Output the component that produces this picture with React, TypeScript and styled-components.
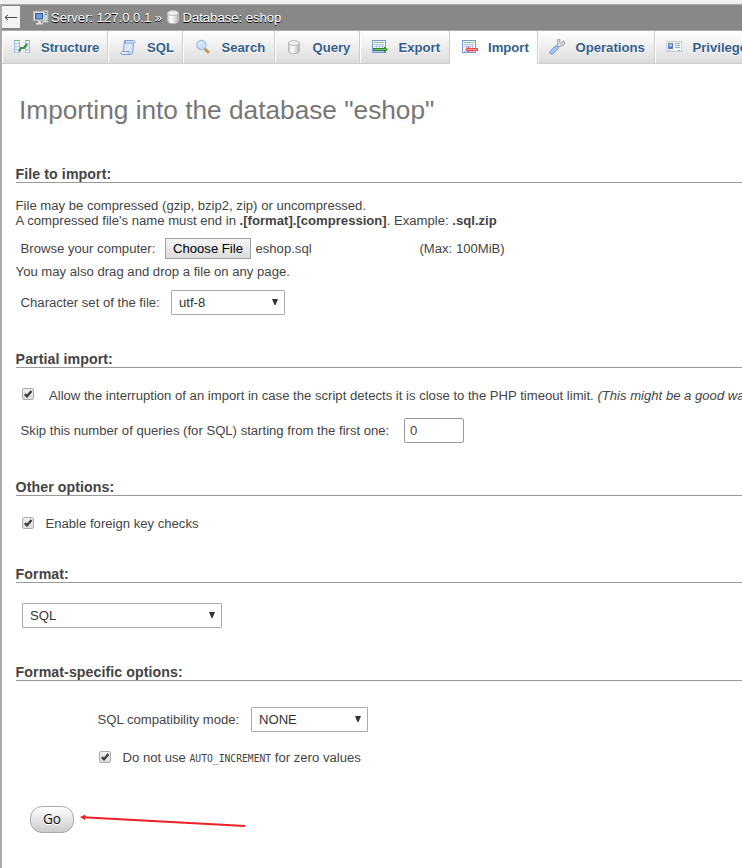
import React from 'react';
import styled, { createGlobalStyle } from 'styled-components';

const Global = createGlobalStyle`
  * { box-sizing: border-box; }
  html, body { margin: 0; background: #fff; overflow: hidden; }
  body { font-family: "Liberation Sans", Arial, sans-serif; font-size: 13.12px; color: #444; }
`;

const Page = styled.div`
  width: 742px;
  height: 868px;
  overflow: hidden;
  background: #fff;
  border-top: 4px solid #f0f0f0;
`;

const Frame = styled.div`
  height: 864px;
  border-left: 2px solid #aaa;
  border-top: 1px solid #aaa;
  white-space: nowrap;
`;

const ServerBar = styled.header`
  display: flex;
  align-items: center;
  height: 25px;
  padding-bottom: 1px;
  background: #888;
  color: #fff;
  text-shadow: 0 1px 0 #000;
  svg { flex: none; }
`;

const CollapseButton = styled.div`
  width: 18px;
  height: 22px;
  margin: 0 13px 0 0;
  background: #f3f3f3;
  display: flex;
  align-items: center;
  justify-content: center;
`;

const Crumb = styled.span<{ $w: number }>`
  width: ${p => p.$w}px;
  margin-left: 2px;
  letter-spacing: -0.02px;
`;

const Tabs = styled.nav`
  display: flex;
  height: 34px;
  border-top: 1px solid #aaa;
`;

const Tab = styled.a<{ $w: number; $active?: boolean; $gap: number; $pad: number }>`
  flex: none;
  display: flex;
  align-items: center;
  width: ${p => p.$w}px;
  height: 33px;
  padding-left: ${p => p.$pad}px;
  gap: ${p => p.$gap}px;
  border-right: 1px solid #ccc;
  border-bottom: 1px solid ${p => (p.$active ? '#fff' : '#ccc')};
  box-shadow: ${p => (p.$active ? 'none' : 'inset 1px 0 0 #fff')};
  background: ${p => (p.$active ? '#fff' : 'linear-gradient(#ffffff, #dcdcdc)')};
  color: #335f8c;
  font-weight: bold;
  text-shadow: 0 1px 0 #fff;
  svg { flex: none; }
`;

const Title = styled.h2`
  margin: 29px 0 0 17px;
  height: 34px;
  line-height: 34px;
  font-size: 26.24px;
  font-weight: normal;
  color: #777;
`;

const Section = styled.section<{ $top: number }>`
  margin: ${p => p.$top}px 0 0 13.6px;
`;

const Heading = styled.h3`
  margin: 0;
  height: 17px;
  line-height: 17px;
  font-size: 14.2px;
  color: #444;
  border-bottom: 1px solid #999;
  letter-spacing: 0.07px;
`;

const Row = styled.div<{ $top?: number; $h?: number; $left?: number }>`
  display: flex;
  align-items: center;
  height: ${p => p.$h ?? 15}px;
  margin-top: ${p => p.$top ?? 0}px;
  padding-left: ${p => p.$left ?? 0}px;
`;

const Text = styled.span<{ $w?: number }>`
  flex: none;
  width: ${p => (p.$w ? p.$w + 'px' : 'auto')};
  white-space: pre;
`;

const FileButton = styled.span`
  width: 86px;
  height: 21px;
  margin-right: 4.500px;
  border: 1px solid #a0a0a0;
  background: linear-gradient(#f6f6f6, #dcdcdc);
  color: #000;
  text-align: center;
  line-height: 19px;
`;

const Select = styled.span<{ $w: number }>`
  display: flex;
  align-items: center;
  justify-content: space-between;
  width: ${p => p.$w}px;
  height: 25px;
  padding: 0 6px 0 7px;
  border: 1px solid #aaa;
  border-radius: 1px;
  background: #fff;
  color: #333;
  svg { margin-bottom: 2px; }
`;

const NumberBox = styled.span`
  width: 60px;
  height: 25px;
  padding-left: 5px;
  border: 1px solid #999;
  border-radius: 2px;
  line-height: 23px;
`;

const Code = styled.code`
  font-family: "DejaVu Sans Mono", monospace;
  font-size: 9.7px;
`;

const CheckBox = styled.span<{ $gap: number; $lift?: number }>`
  flex: none;
  display: flex;
  width: 12px;
  height: 12px;
  margin-right: ${p => p.$gap}px;
  margin-bottom: ${p => p.$lift ?? 1}px;
  border: 1px solid #acacac;
  border-radius: 2px;
  background: linear-gradient(#f0f0f0, #dcdcdc);
`;

const Check = ({ gap, lift }: { gap: number; lift?: number }) => (
  <CheckBox $gap={gap} $lift={lift}>
    <svg width="10" height="10" viewBox="0 0 10 10">
      <path d="M1.800 5.200 L4 7.300 L8.500 2" fill="none" stroke="#3d3d3d" strokeWidth="2.300" />
    </svg>
  </CheckBox>
);

const Drop = ({ w, children }: { w: number; children: React.ReactNode }) => (
  <Select $w={w}>
    <span>{children}</span>
    <svg width="6" height="6" viewBox="0 0 6 6"><path d="M0 0h6L3.500 6h-1z" fill="#333" /></svg>
  </Select>
);

const Actions = styled.div`
  display: flex;
  align-items: flex-start;
  margin: 41px 0 0 28px;
`;

const GoButton = styled.button`
  width: 44px;
  height: 27px;
  padding: 0 0 2px;
  border: 1px solid #aaa;
  border-radius: 12px;
  background: linear-gradient(#ffffff, #cccccc);
  font: 13.6px "Open Sans", sans-serif;
  color: #111;
  text-shadow: 0 1px 0 #fff;
`;

const Arrow = styled.svg`
  margin: 7px 0 0 5px;
`;

const ServerIcon = () => (
  <svg width="16" height="16" viewBox="0 0 16 16">
    <path d="M9.500 1.500h5.500v12H9.500z" fill="#d8d8d5" stroke="#aaa" />
    <path d="M11 3.500h3M11 5.500h3" stroke="#777" />
    <path d="M13 11h1v1h-1z" fill="#5bb450" />
    <rect x=".5" y="2.500" width="11" height="9" fill="#e6e6e2" stroke="#bbb" />
    <rect x="2.500" y="4.500" width="7" height="5.500" fill="#6f98d8" stroke="#315a9c" />
    <path d="M5 12h3v2h2v1.500H3V14h2z" fill="#ddd" />
  </svg>
);

const DatabaseIcon = () => (
  <svg width="16" height="16" viewBox="0 0 16 16">
    <defs>
      <linearGradient id="cyl"><stop offset="0" stopColor="#ccc" /><stop offset=".35" stopColor="#fff" /><stop offset="1" stopColor="#b4b4b4" /></linearGradient>
    </defs>
    <path d="M2.500 4v8.300c0 3 11 3 11 0V4" fill="url(#cyl)" stroke="#b8b8b8" />
    <ellipse cx="8" cy="4" rx="5.500" ry="2.400" fill="#f0f0f0" stroke="#b8b8b8" />
  </svg>
);

const StructureIcon = () => (
  <svg width="16" height="16" viewBox="0 0 16 16">
    <path d="M0 1h6v13H0zM11 1h5v13h-5z" fill="#e9f0fb" />
    <path d="M0 1.500h6M11 1.500h5" stroke="#7ac36a" />
    <path d="M0 4.500h5M0 7.500h5M0 10.500h5M0 13.500h5M12 4.500h4M12 7.500h4M12 10.500h4M12 13.500h4" stroke="#b4c9f0" />
    <path d="M.5 2v12M5.500 2v12M11.500 2v12M15.500 2v12" stroke="#9db8ea" />
    <path d="M5 12.500 7 9h3l3-4" fill="none" stroke="#3e9440" strokeWidth="2.200" />
  </svg>
);

const SqlIcon = () => (
  <svg width="16" height="16" viewBox="0 0 16 16">
    <path d="M4.500 1.500h9c2 0 2 2.500 0 2.500L12.500 13c0 2-1 2.500-2.500 2.500H2c-1.500 0-1.500-3 .5-3h1z" fill="#dce8fb" stroke="#7b9ed8" />
    <path d="M4.500 1.500c1.200.5 1 2.500.3 2.500h8.700M3 12.500h6.500c-1 1.200-.5 2.500.5 3" fill="none" stroke="#7b9ed8" />
  </svg>
);

const SearchIcon = () => (
  <svg width="16" height="16" viewBox="0 0 16 16">
    <path d="M9.800 9.800 13 13" stroke="#c79658" strokeWidth="3" strokeLinecap="round" />
    <circle cx="6.300" cy="6" r="4.600" fill="#cbe0fb" stroke="#a3bce4" strokeWidth="1.300" />
    <path d="M3.700 5.500c.5-1.500 2-2.200 3.300-1.800" stroke="#fff" fill="none" />
  </svg>
);

const SheetIcon = ({ kind }: { kind: 'export' | 'import' }) => (
  <svg width="16" height="16" viewBox="0 0 16 16">
    <rect x=".5" y="1.500" width="13" height="12" fill="#f5f8ff" stroke="#7796d8" />
    <path d="M2 3.500h10" stroke="#8dc97c" />
    <path d="M2 5.500h10M2 7.500h10M2 12.500h10M4.500 5v8M7.500 5v8M10.500 5v8" stroke="#b7c8ee" />
    {kind === 'export' ? (
      <>
        <path d="M1 9h11V7.500l4 3-4 3V12H1z" fill="#2f8a2f" />
        <path d="M2 10.500h12" stroke="#79b86d" />
      </>
    ) : (
      <>
        <path d="M16 9H7V7.500l-4 3 4 3V12h9z" fill="#ee4a41" />
        <path d="M5 10.500h10" stroke="#fa9b94" />
      </>
    )}
  </svg>
);

const WrenchIcon = () => (
  <svg width="16" height="16" viewBox="0 0 16 16">
    <path d="M7.500 8.500 11 5" stroke="#999" strokeWidth="3.400" />
    <path d="M8.300.8 11 .5 10.500 3.300 12.500 4.500 14.200 2 15.600 2.500 15.300 5.500 12.500 7.200 9.300 6.200 8.300 3.500z" fill="#ddd" stroke="#999" strokeWidth=".9" />
    <path d="M7.800 8.200 11 5" stroke="#ddd" strokeWidth="1.800" />
    <path d="M2.700 13.300 7.300 8.700" stroke="#7896da" strokeWidth="4.600" strokeLinecap="round" />
    <path d="M2.700 13.300 7.300 8.700" stroke="#a9c3f3" strokeWidth="2.900" strokeLinecap="round" />
  </svg>
);

const PrivilegesIcon = () => (
  <svg width="16" height="16" viewBox="0 0 16 16">
    <rect x=".5" y="2.500" width="15" height="10" fill="#f7f7f7" stroke="#ccc" />
    <rect x="2" y="4" width="5" height="6" fill="#4a83d0" />
    <circle cx="4.500" cy="6.200" r="1.400" fill="#f3c58b" />
    <path d="M9 4.500h5M9 6.500h5M9 8.500h5" stroke="#93abd9" />
    <path d="M2 11.500h2M12 11.500h2" stroke="#aaa" />
  </svg>
);

const tabs = [
  { label: 'Structure', w: 106, pad: 12, gap: 11, icon: <StructureIcon /> },
  { label: 'SQL', w: 75, pad: 12, gap: 11, icon: <SqlIcon /> },
  { label: 'Search', w: 92, pad: 12, gap: 10.5, icon: <SearchIcon /> },
  { label: 'Query', w: 85, pad: 11, gap: 10.5, icon: <DatabaseIcon /> },
  { label: 'Export', w: 90, pad: 12, gap: 10.5, icon: <SheetIcon kind="export" /> },
  { label: 'Import', w: 88, pad: 12, gap: 10, icon: <SheetIcon kind="import" />, active: true },
  { label: 'Operations', w: 117, pad: 11, gap: 10.5, icon: <WrenchIcon /> },
  { label: 'Privileges', w: 110, pad: 11, gap: 10.5, icon: <PrivilegesIcon /> },
];

export default function App() {
  return (
    <>
      <Global />
      <Page>
        <Frame>
          <ServerBar>
            <CollapseButton>
              <svg width="14" height="9" viewBox="0 0 14 9"><path d="M1 4.500h12M4 2 1 4.500l3 2.500" fill="none" stroke="#444" /></svg>
            </CollapseButton>
            <ServerIcon />
            <Crumb $w={113.5}>Server: 127.0.0.1 »</Crumb>
            <DatabaseIcon />
            <Crumb $w={110}>Database: eshop</Crumb>
          </ServerBar>
          <Tabs>
            {tabs.map(t => (
              <Tab key={t.label} $w={t.w} $pad={t.pad} $gap={t.gap} $active={t.active}>
                {t.icon}<span>{t.label}</span>
              </Tab>
            ))}
          </Tabs>
          <Title>Importing into the database "eshop"</Title>
          <Section $top={39}>
            <Heading>File to import:</Heading>
            <Row $top={15}><Text>File may be compressed (gzip, bzip2, zip) or uncompressed.</Text></Row>
            <Row><Text>A compressed file's name must end in <b>.[format].[compression]</b>. Example: <b>.sql.zip</b></Text></Row>
            <Row $top={10} $h={21} $left={5}>
              <Text $w={144.4}>Browse your computer:</Text>
              <FileButton>Choose File</FileButton>
              <Text $w={164}>eshop.sql</Text>
              <Text>(Max: 100MiB)</Text>
            </Row>
            <Row $top={5}><Text>You may also drag and drop a file on any page.</Text></Row>
            <Row $top={11} $h={25} $left={5}>
              <Text $w={150.4}>Character set of the file:</Text>
              <Drop w={114}>utf-8</Drop>
            </Row>
          </Section>
          <Section $top={36}>
            <Heading>Partial import:</Heading>
            <Row $top={20} $left={6.4}>
              <Check gap={15} lift={3} />
              <Text>Allow the interruption of an import in case the script detects it is close to the PHP timeout limit. <i>(This might be a good way</i></Text>
            </Row>
            <Row $top={15} $h={25} $left={5}>
              <Text $w={383.4}>Skip this number of queries (for SQL) starting from the first one:</Text>
              <NumberBox>0</NumberBox>
            </Row>
          </Section>
          <Section $top={36}>
            <Heading>Other options:</Heading>
            <Row $top={20} $left={6.4}>
              <Check gap={11.5} />
              <Text>Enable foreign key checks</Text>
            </Row>
          </Section>
          <Section $top={35}>
            <Heading>Format:</Heading>
            <Row $top={20} $h={25} $left={6.4}><Drop w={200}>SQL</Drop></Row>
          </Section>
          <Section $top={36}>
            <Heading>Format-specific options:</Heading>
            <Row $top={26} $h={25} $left={82}>
              <Text $w={153.4}>SQL compatibility mode:</Text>
              <Drop w={117}>NONE</Drop>
            </Row>
            <Row $top={18} $left={83.4}>
              <Check gap={11.5} />
              <Text>Do not use <Code>AUTO_INCREMENT</Code> for zero values</Text>
            </Row>
          </Section>
          <Actions>
            <GoButton>Go</GoButton>
            <Arrow width="168" height="16" viewBox="0 0 168 16">
              <path d="M4 4.200 166 13" stroke="#ed2024" strokeWidth="1.900" />
              <path d="M1 4 6.500 1.500 6 7z" fill="#ed2024" />
            </Arrow>
          </Actions>
        </Frame>
      </Page>
    </>
  );
}
